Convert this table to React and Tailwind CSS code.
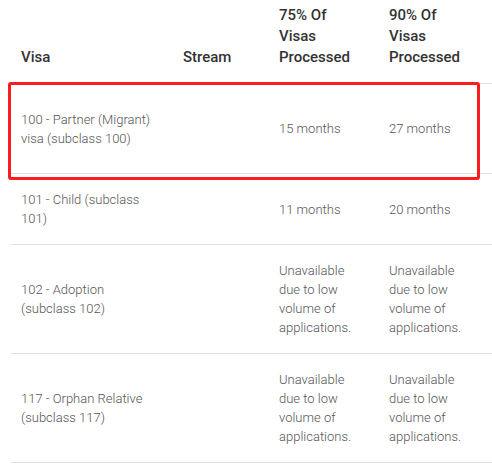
export default function App() {
  const rows = [
    { visa: "100 - Partner (Migrant) visa (subclass 100)", stream: "", p75: "15 months", p90: "27 months", h: "h-[90px]" },
    { visa: "101 - Child (subclass 101)", stream: "", p75: "11 months", p90: "20 months", h: "" },
    { visa: "102 - Adoption (subclass 102)", stream: "", p75: "Unavailable due to low volume of applications.", p90: "Unavailable due to low volume of applications.", h: "" },
    { visa: "117 - Orphan Relative (subclass 117)", stream: "", p75: "Unavailable due to low volume of applications.", p90: "Unavailable due to low volume of applications.", h: "" },
  ];
  return (
    <div className="relative w-[492px] h-[466px] bg-white overflow-hidden" style={{ fontFamily: "Roboto, 'Noto Sans', sans-serif" }}>
      <table className="ml-[11px] w-[481px] table-fixed border-collapse">
        <thead>
          <tr className="border-b border-[#e0e0e0]">
            <th className="w-[162px] pl-[10px] pr-4 pt-[5px] pb-[15px] align-bottom text-left text-[15px] leading-[21px] font-medium text-[#333]">Visa</th>
            <th className="w-[96px] pl-[10px] pr-4 pt-[5px] pb-[15px] align-bottom text-left text-[15px] leading-[21px] font-medium text-[#333]">Stream</th>
            <th className="w-[110px] pl-[10px] pr-4 pt-[5px] pb-[15px] align-bottom text-left text-[15px] leading-[21px] font-medium text-[#333]">75% Of Visas Processed</th>
            <th className="w-[113px] pl-[10px] pr-[19px] pt-[5px] pb-[15px] align-bottom text-left text-[15px] leading-[21px] font-medium text-[#333]">90% Of Visas Processed</th>
          </tr>
        </thead>
        <tbody>
          {rows.map((r, i) => (
            <tr key={i} className={`border-b border-[#e0e0e0] ${r.h}`}>
              <td className="pl-[10px] pr-4 py-4 align-middle text-[13px] leading-[19px] font-light text-[#555]">{r.visa}</td>
              <td className="pl-[10px] pr-4 py-4 align-middle text-[13px] leading-[19px] font-light text-[#555]">{r.stream}</td>
              <td className="pl-[10px] pr-4 py-4 align-middle text-[13px] leading-[19px] font-light text-[#555]">{r.p75}</td>
              <td className="pl-[10px] pr-[19px] py-4 align-middle text-[13px] leading-[19px] font-light text-[#555]">{r.p90}</td>
            </tr>
          ))}
        </tbody>
      </table>
      <div className="absolute left-[8px] top-[82px] w-[472px] h-[98px] border-[3px] border-[#fe1b1b] rounded-[3px] pointer-events-none" />
    </div>
  );
}
